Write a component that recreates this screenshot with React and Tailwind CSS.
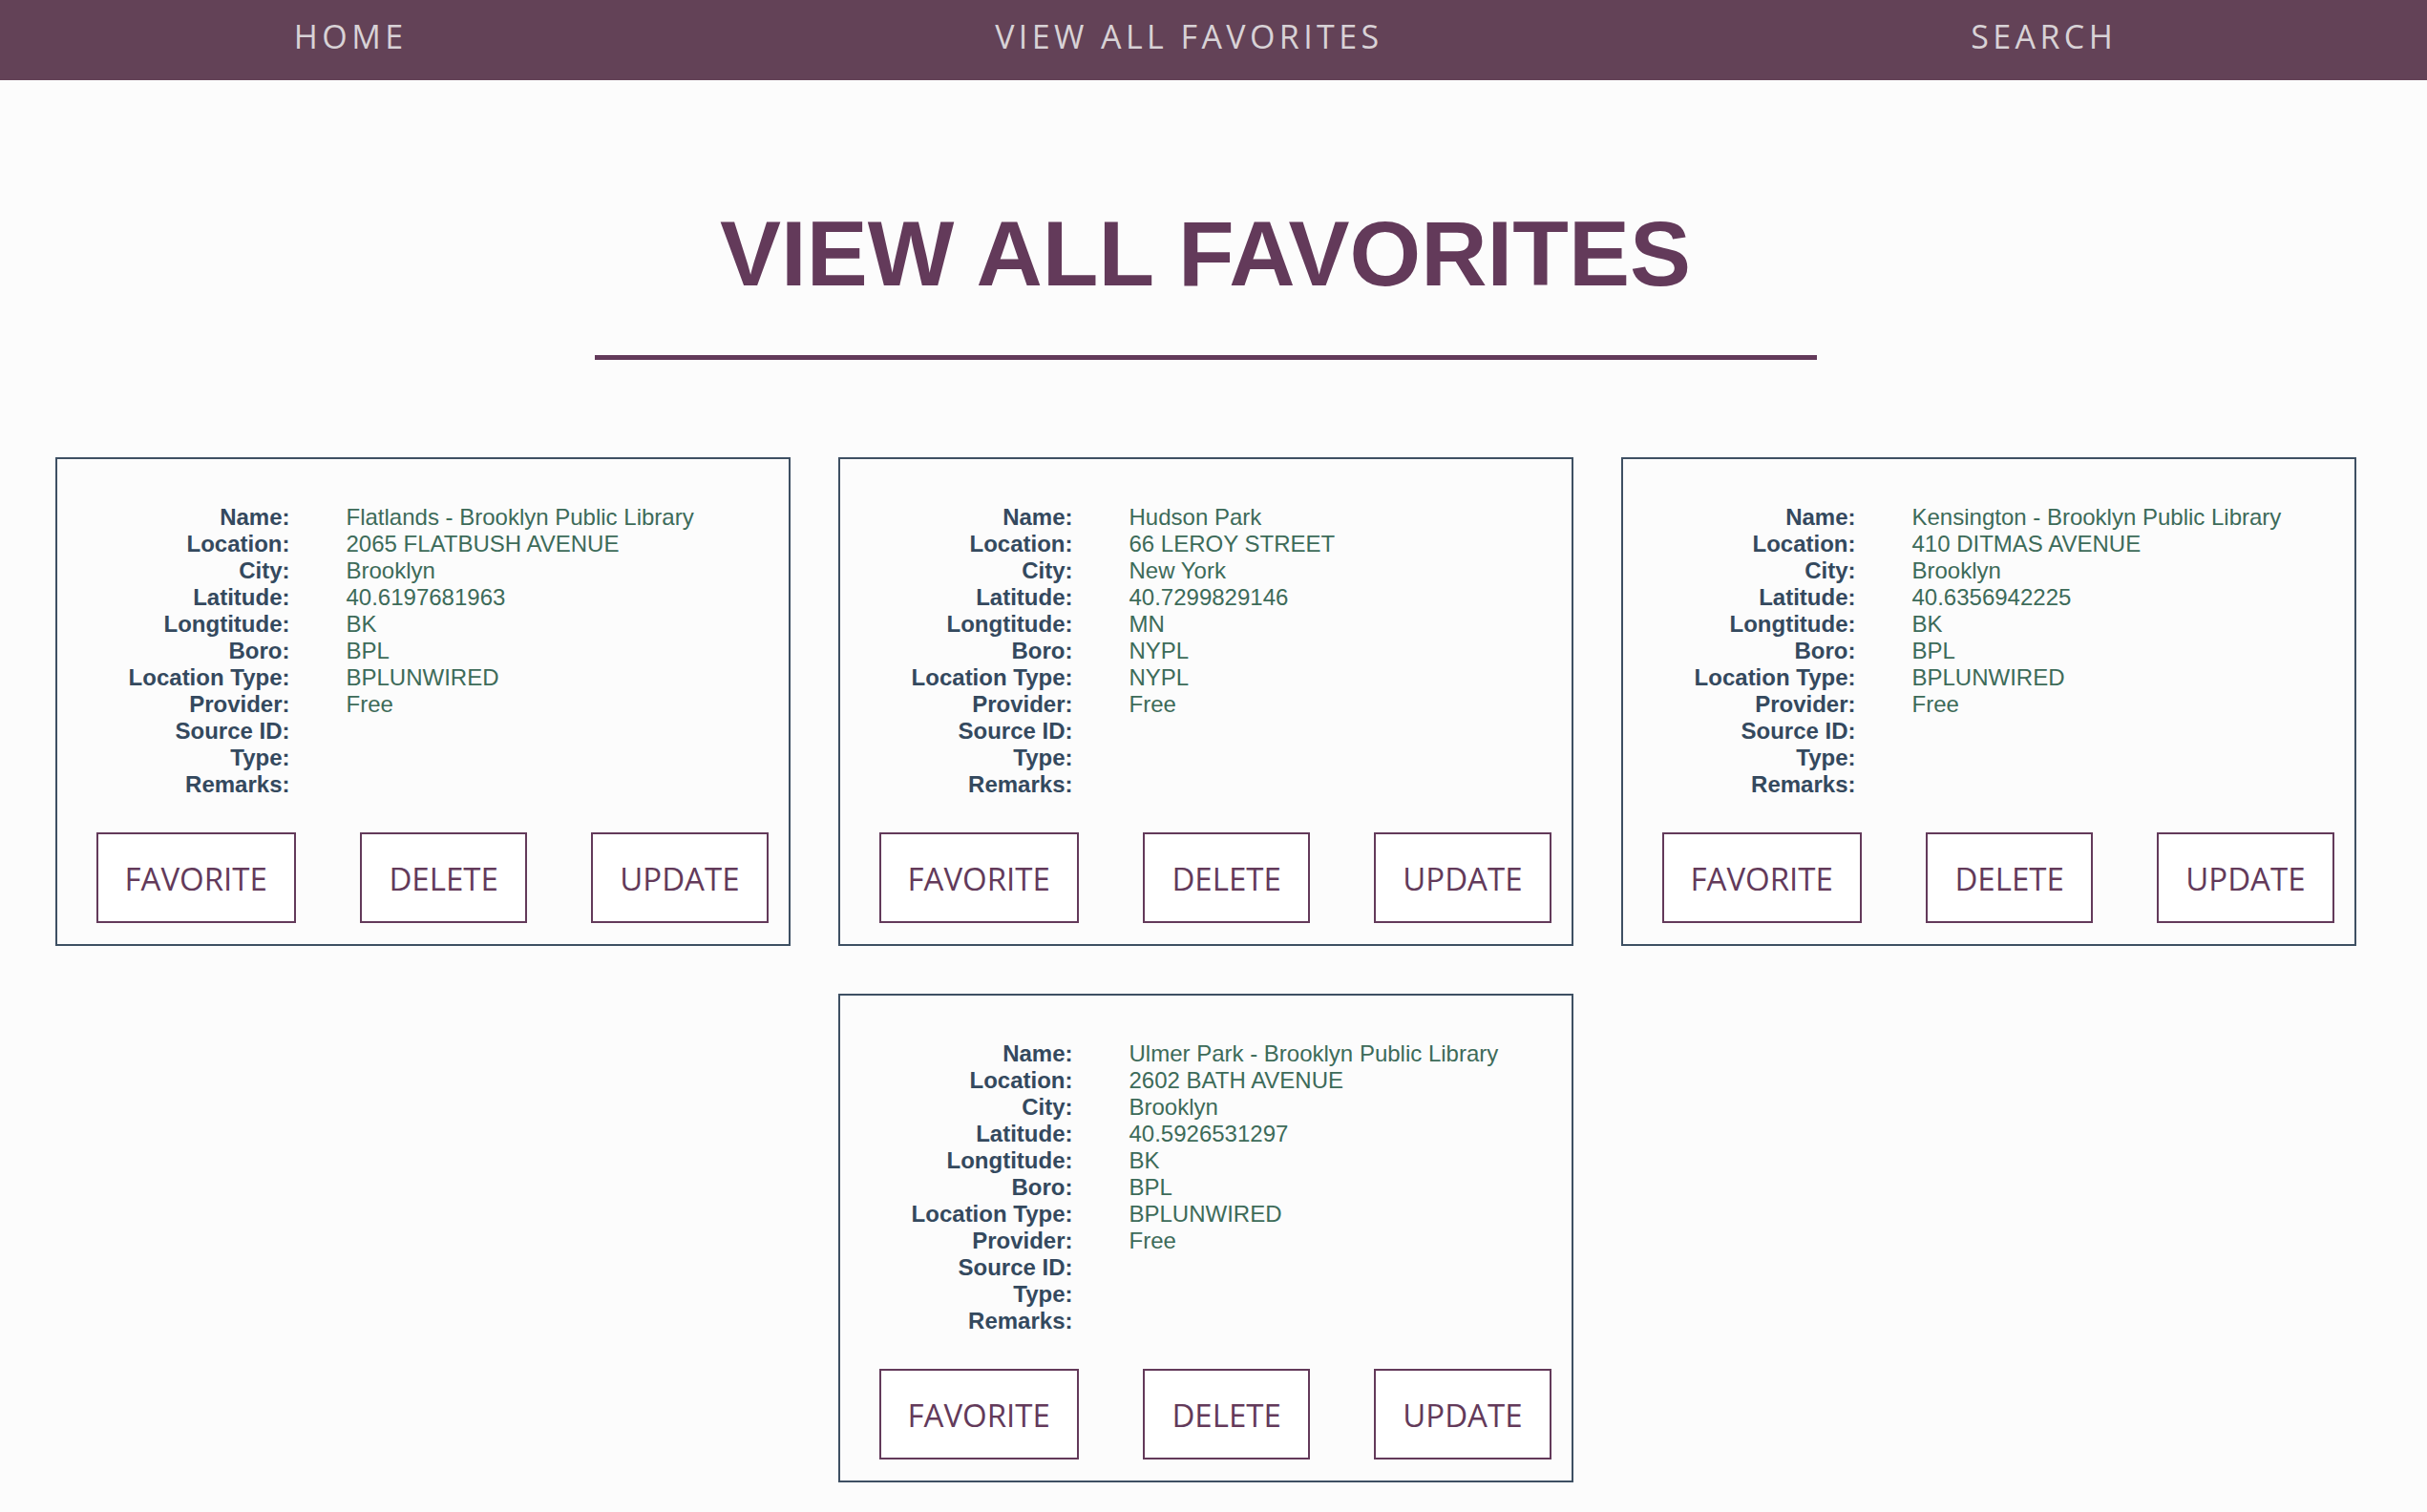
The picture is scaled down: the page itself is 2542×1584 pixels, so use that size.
import React from 'react';

const favorites = [
  {
    name: 'Flatlands - Brooklyn Public Library',
    location: '2065 FLATBUSH AVENUE',
    city: 'Brooklyn',
    latitude: '40.6197681963',
    longtitude: 'BK',
    boro: 'BPL',
    locationType: 'BPLUNWIRED',
    provider: 'Free',
  },
  {
    name: 'Hudson Park',
    location: '66 LEROY STREET',
    city: 'New York',
    latitude: '40.7299829146',
    longtitude: 'MN',
    boro: 'NYPL',
    locationType: 'NYPL',
    provider: 'Free',
  },
  {
    name: 'Kensington - Brooklyn Public Library',
    location: '410 DITMAS AVENUE',
    city: 'Brooklyn',
    latitude: '40.6356942225',
    longtitude: 'BK',
    boro: 'BPL',
    locationType: 'BPLUNWIRED',
    provider: 'Free',
  },
  {
    name: 'Ulmer Park - Brooklyn Public Library',
    location: '2602 BATH AVENUE',
    city: 'Brooklyn',
    latitude: '40.5926531297',
    longtitude: 'BK',
    boro: 'BPL',
    locationType: 'BPLUNWIRED',
    provider: 'Free',
  },
];

const fields = [
  ['Name:', 'name'],
  ['Location:', 'location'],
  ['City:', 'city'],
  ['Latitude:', 'latitude'],
  ['Longtitude:', 'longtitude'],
  ['Boro:', 'boro'],
  ['Location Type:', 'locationType'],
  ['Provider:', 'provider'],
  ['Source ID:', 'sourceId'],
  ['Type:', 'type'],
  ['Remarks:', 'remarks'],
];

const NavLink = ({ children }) => (
  <a
    href="#"
    className="text-[34px] tracking-[4.4px] text-[#d8d2d6] font-['Open_Sans',sans-serif]"
  >
    {children}
  </a>
);

const CardButton = ({ children }) => (
  <button className="h-[95px] px-[28px] pt-[2px] border-2 border-[#633a5a] bg-white text-[#633a5a] text-[33px] font-['Open_Sans',sans-serif] leading-none">
    {children}
  </button>
);

const FavoriteCard = ({ item }) => (
  <div className="w-[770px] h-[512px] border-2 border-[#3e5063] pt-[47px] font-['Liberation_Sans',Arial,sans-serif]">
    <div className="grid grid-cols-[244px_1fr] text-[24px] leading-[28px]">
      {fields.map(([label, key]) => (
        <React.Fragment key={key}>
          <div className="text-right font-bold text-[#34495e]">{label}</div>
          <div className="pl-[59px] text-[#3d6b59]">{item[key] || ''}</div>
        </React.Fragment>
      ))}
    </div>
    <div className="mt-[36px] flex justify-between pl-[41px] pr-[21px]">
      <CardButton>FAVORITE</CardButton>
      <CardButton>DELETE</CardButton>
      <CardButton>UPDATE</CardButton>
    </div>
  </div>
);

export default function App() {
  return (
    <div className="min-h-screen bg-[#fcfcfc]">
      <nav className="h-[84px] bg-[#634257] flex items-center justify-around pb-[7px] pr-[17px]">
        <NavLink>HOME</NavLink>
        <NavLink>VIEW ALL FAVORITES</NavLink>
        <NavLink>SEARCH</NavLink>
      </nav>

      <main className="pr-[17px] pb-[31px]">
        <h1 className="mt-[134px] text-center text-[96px] leading-[95px] font-bold text-[#633a5a] font-['Liberation_Sans',Arial,sans-serif]">
          VIEW ALL FAVORITES
        </h1>
        <div className="mx-auto mt-[59px] w-[1280px] h-[5px] bg-[#633a5a]" />

        <div className="mx-auto mt-[102px] w-[2410px] flex flex-wrap justify-center gap-[50px]">
          {favorites.map((item) => (
            <FavoriteCard key={item.name} item={item} />
          ))}
        </div>
      </main>
    </div>
  );
}
